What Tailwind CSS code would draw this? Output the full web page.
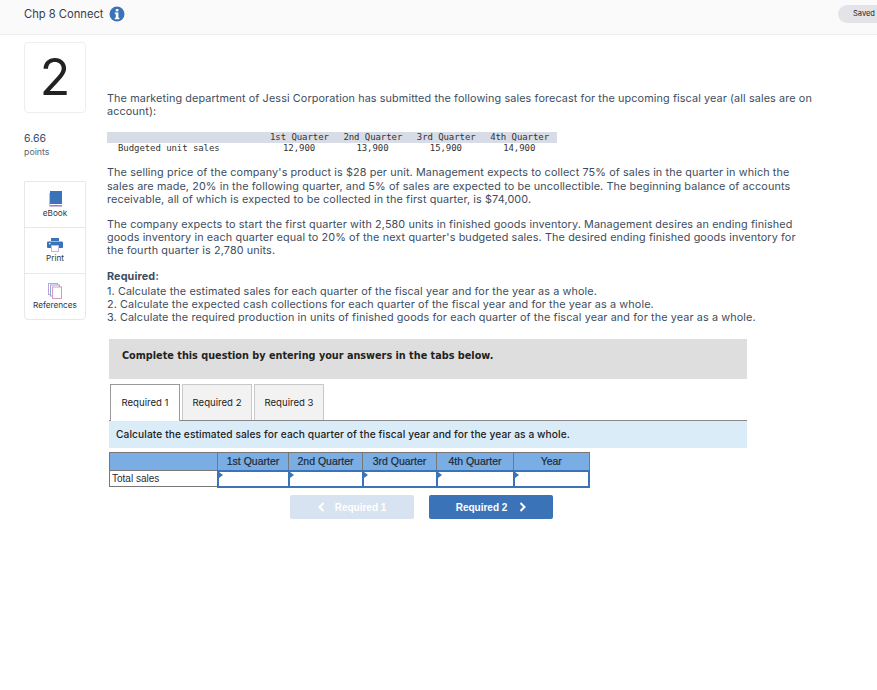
<!DOCTYPE html>
<html lang="en">
<head>
  <meta charset="UTF-8">
  <title>Chp 8 Connect</title>
  <script src="https://cdn.jsdelivr.net/npm/@tailwindcss/browser@4"></script>
</head>
<body class="bg-white font-['Inter',sans-serif] text-[#2b3a4a] h-[690px] overflow-hidden">

  <header class="h-[35px] bg-[#fafafa] border-b border-[#eeeeee] flex items-start pl-[24px] justify-between">
    <div class="mt-[6px] flex items-center gap-[5px] text-[11.2px] text-[#333f4d]">
      <span>Chp 8 Connect</span>
      <svg width="16" height="16" viewBox="0 0 16 16"><circle cx="8" cy="8" r="7.5" fill="#3b73b9"/><rect x="6.8" y="3" width="2.6" height="2.4" fill="#fff"/><path d="M5.8 6.6h3.6v5.2h1v1.4H5.8v-1.4h1V8H5.8z" fill="#fff"/></svg>
    </div>
    <div class="mt-[5px] w-[39px] h-[18px] rounded-l-full bg-[#e4e4e8] text-[7.5px] text-[#222] flex items-center pl-[15px] overflow-hidden">Saved</div>
  </header>

  <div class="flex">
    <aside class="w-[62px] ml-[24px] pt-[7px] shrink-0">
      <div class="h-[71px] border border-[#eeeeee] rounded-[4px] flex items-center justify-center pb-[1px] text-[50px] text-[#222] font-normal leading-none">2</div>
      <div class="mt-[19px] text-[10.5px] leading-[13px] text-[#2f4a6b]">6.66</div>
      <div class="text-[8.8px] leading-[13px] text-[#5b6470]">points</div>
      <div class="mt-[23px] border border-[#e8e8e8] rounded-b-[4px] text-[8.2px] text-[#2b3a4a] text-center">
        <div class="h-[46px] border-b border-[#e8e8e8] flex flex-col items-center pt-[9px]">
          <svg width="15" height="16" viewBox="0 0 15 16"><path d="M1 2h1v12h12v2H2.5A1.5 1.5 0 0 1 1 14.5z" fill="#c9b6e6"/><rect x="2" y="0" width="12" height="13" fill="#3b73b9"/><rect x="2" y="13" width="12" height="1.2" fill="#fff"/><rect x="2" y="14.2" width="12" height="0.8" fill="#6c86b8"/></svg>
          <span class="mt-[1px] leading-[11px]">eBook</span>
        </div>
        <div class="h-[46px] border-b border-[#e8e8e8] flex flex-col items-center pt-[10px]">
          <svg width="16" height="14" viewBox="0 0 16 14"><rect x="4" y="0" width="8" height="3" fill="#3b73b9"/><rect x="0" y="3.5" width="16" height="6.5" rx="1" fill="#3b73b9"/><rect x="4" y="7" width="8" height="7" fill="#c9b6e6"/><rect x="5" y="8" width="6" height="5" fill="#fff"/><rect x="2" y="5" width="1.5" height="1.2" fill="#fff"/></svg>
          <span class="mt-[1px] leading-[11px]">Print</span>
        </div>
        <div class="h-[45px] flex flex-col items-center pt-[9px]">
          <svg width="14" height="16" viewBox="0 0 14 16"><rect x="0.5" y="0.5" width="9" height="11" fill="#fff" stroke="#b9a5dc"/><rect x="2.5" y="2" width="9" height="11" fill="#fff" stroke="#8fa9d4"/><rect x="4.5" y="4" width="9" height="11.5" fill="#fff" stroke="#d79ac0"/></svg>
          <span class="mt-[1px] leading-[11px]">References</span>
        </div>
      </div>
    </aside>

    <main class="ml-[21px] w-[720px] pt-[57px]">
      <div class="text-[10.8px] tracking-[0.12px] leading-[13.2px] text-[#3d4d60]">
        <p>The marketing department of Jessi Corporation has submitted the following sales forecast for the upcoming fiscal year (all sales are on account):</p>

        <div class="mt-[14px] w-[450px] font-['DejaVu_Sans_Mono',monospace] text-[9px] tracking-[-0.07px] leading-[11px] text-[#333]">
          <div class="grid grid-cols-[156px_repeat(4,73.4px)] bg-[#d8dce6] h-[11px]">
            <span></span><span class="pl-[7px]">1st Quarter</span><span class="pl-[7px]">2nd Quarter</span><span class="pl-[7px]">3rd Quarter</span><span class="pl-[7px]">4th Quarter</span>
          </div>
          <div class="grid grid-cols-[156px_repeat(4,73.4px)] h-[11px]">
            <span class="pl-[11px]">Budgeted unit sales</span><span class="pl-[20px]">12,900</span><span class="pl-[20px]">13,900</span><span class="pl-[20px]">15,900</span><span class="pl-[20px]">14,900</span>
          </div>
        </div>

        <p class="mt-[12px] w-[700px]">The selling price of the company's product is $28 per unit. Management expects to collect 75% of sales in the quarter in which the sales are made, 20% in the following quarter, and 5% of sales are expected to be uncollectible. The beginning balance of accounts receivable, all of which is expected to be collected in the first quarter, is $74,000.</p>

        <p class="mt-[12px] w-[700px]">The company expects to start the first quarter with 2,580 units in finished goods inventory. Management desires an ending finished goods inventory in each quarter equal to 20% of the next quarter's budgeted sales. The desired ending finished goods inventory for the fourth quarter is 2,780 units.</p>

        <p class="mt-[12px] font-bold">Required:</p>
        <p class="mt-[2px]">1. Calculate the estimated sales for each quarter of the fiscal year and for the year as a whole.</p>
        <p>2. Calculate the expected cash collections for each quarter of the fiscal year and for the year as a whole.</p>
        <p>3. Calculate the required production in units of finished goods for each quarter of the fiscal year and for the year as a whole.</p>
      </div>

      <div class="ml-[2px] w-[638px] mt-[15px]">
        <div class="h-[40px] bg-[#dedede] flex items-center pl-[13px] pb-[7px] font-['DejaVu_Sans',sans-serif] font-bold text-[9.7px] text-[#222]">Complete this question by entering your answers in the tabs below.</div>

        <div class="mt-[5px] h-[37px] flex gap-[2px] border-b border-[#888] pl-[1px] text-[9.6px] text-[#222]">
          <div class="w-[70px] h-[37px] bg-white border border-b-0 border-[#999] flex items-center justify-center">Required 1</div>
          <div class="w-[70px] h-[36px] bg-[#f2f2f2] border border-b-0 border-[#c8c8c8] flex items-center justify-center">Required 2</div>
          <div class="w-[70px] h-[36px] bg-[#f2f2f2] border border-b-0 border-[#c8c8c8] flex items-center justify-center">Required 3</div>
        </div>

        <div class="h-[27px] bg-[#dbecf9] flex items-center pl-[7px] pb-[1px] text-[10.2px] tracking-[0.09px] font-medium text-[#222]">Calculate the estimated sales for each quarter of the fiscal year and for the year as a whole.</div>

        <table class="mt-[4px] w-[481px] table-fixed border-collapse font-['Liberation_Sans',sans-serif] text-[10.5px] text-[#1e2a36]">
          <tbody>
            <tr class="h-[18px] bg-[#79ade4] text-center [-webkit-text-stroke:0.2px]">
              <td class="w-[108px] border border-[#777]"></td>
              <td class="w-[71px] border border-[#777]">1st Quarter</td>
              <td class="w-[74px] border border-[#777]">2nd Quarter</td>
              <td class="w-[74px] border border-[#777]">3rd Quarter</td>
              <td class="w-[77px] border border-[#777]">4th Quarter</td>
              <td class="border border-[#777]">Year</td>
            </tr>
            <tr class="h-[16px] leading-[14px]">
              <td class="border border-[#777] pl-[2px] text-[10px]">Total sales</td>
              <td class="border-2 border-[#3b73b9] relative"><span class="absolute left-0 top-0 border-y-[3px] border-l-[4px] border-y-transparent border-l-[#3b73b9]"></span></td>
              <td class="border-2 border-[#3b73b9] relative"><span class="absolute left-0 top-0 border-y-[3px] border-l-[4px] border-y-transparent border-l-[#3b73b9]"></span></td>
              <td class="border-2 border-[#3b73b9] relative"><span class="absolute left-0 top-0 border-y-[3px] border-l-[4px] border-y-transparent border-l-[#3b73b9]"></span></td>
              <td class="border-2 border-[#3b73b9] relative"><span class="absolute left-0 top-0 border-y-[3px] border-l-[4px] border-y-transparent border-l-[#3b73b9]"></span></td>
              <td class="border-2 border-[#3b73b9] relative"><span class="absolute left-0 top-0 border-y-[3px] border-l-[4px] border-y-transparent border-l-[#3b73b9]"></span></td>
            </tr>
          </tbody>
        </table>

        <div class="mt-[7px] ml-[181px] flex gap-[15px] font-['Liberation_Sans',sans-serif] text-[10px] font-bold text-white">
          <div class="w-[124px] h-[24px] pt-[1px] bg-[#d8e3f1] rounded-[2px] flex items-center justify-center gap-[10px]">
            <svg width="7" height="10" viewBox="0 0 7 10" fill="none" stroke="#fff" stroke-width="2"><path d="M5.5 1 1.5 5l4 4"/></svg>
            <span>Required 1</span>
          </div>
          <div class="w-[124px] h-[24px] pt-[1px] bg-[#3b73b9] rounded-[2px] flex items-center justify-center gap-[12px]">
            <span>Required 2</span>
            <svg width="7" height="10" viewBox="0 0 7 10" fill="none" stroke="#fff" stroke-width="2"><path d="M1.5 1l4 4-4 4"/></svg>
          </div>
        </div>
      </div>
    </main>
  </div>
</body>
</html>
